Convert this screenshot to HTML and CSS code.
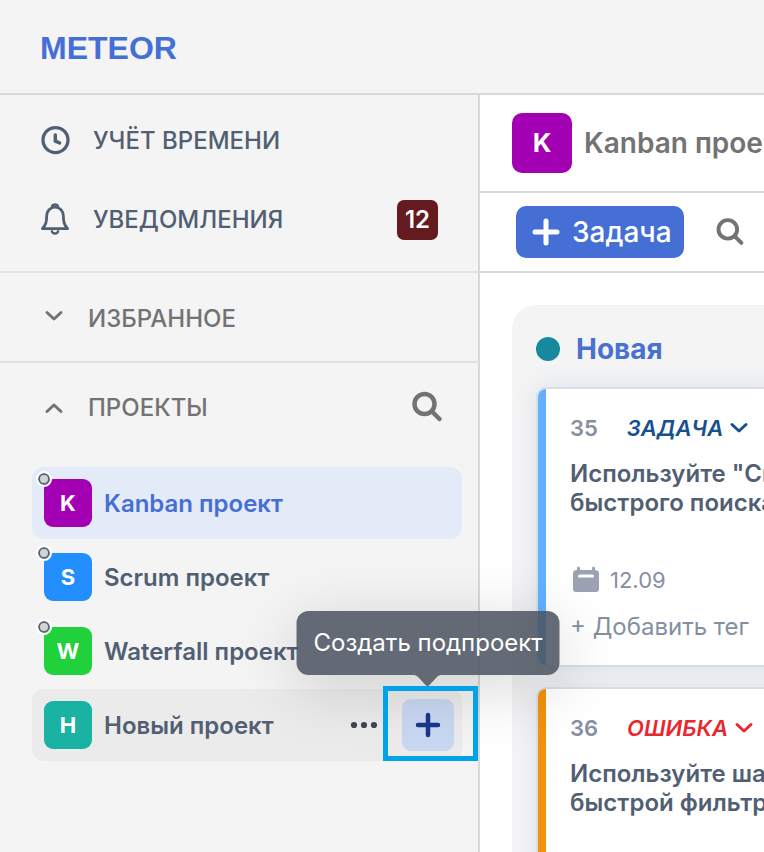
FILE: index.html
```html
<!DOCTYPE html>
<html lang="ru">
<head>
<meta charset="utf-8">
<meta name="viewport" content="width=device-width, initial-scale=1">
<title>METEOR</title>
<link rel="stylesheet" href="styles.css">
</head>
<body>
<div class="app">
  <header class="topbar"><a class="brand" href="#">METEOR</a></header>
  <div class="body">
    <aside class="sidebar">
      <nav class="menu">
        <a class="menu-item" href="#">
          <svg class="menu-icon" viewBox="0 0 32 32" fill="none" stroke="currentColor" stroke-linecap="round" stroke-linejoin="round"><circle cx="16" cy="15" r="12.900" stroke-width="3.400"/><path d="M15.800 9.800v6.400l4.400 1.700" stroke-width="3.600"/></svg>
          <span>УЧЁТ ВРЕМЕНИ</span>
        </a>
        <a class="menu-item" href="#">
          <svg class="menu-icon" viewBox="0 0 32 32" fill="none" stroke="currentColor" stroke-linecap="round" stroke-linejoin="round"><path d="M2.500 25h26c-3.400-4-4.400-6.500-4.400-13.300A8.600 8.600 0 0 0 15.500 2.800a8.600 8.600 0 0 0-8.600 8.900c0 6.800-1 9.300-4.400 13.300z" stroke-width="2.900"/><path d="M12.500 1.400c1-1.800 5-1.800 6 0M12.300 27.700c1 3 5.400 3 6.400 0" stroke-width="2.500"/></svg>
          <span>УВЕДОМЛЕНИЯ</span>
          <span class="count">12</span>
        </a>
      </nav>
      <button class="section-head" type="button">
        <svg class="chevron raised" viewBox="0 0 20 12"><path d="M3 2.500l7 6.500 7-6.500"/></svg>
        <span>ИЗБРАННОЕ</span>
      </button>
      <section class="projects">
        <div class="projects-head">
          <button class="section-head" type="button">
            <svg class="chevron" viewBox="0 0 20 12"><path d="M3 9.500L10 3l7 6.500"/></svg>
            <span>ПРОЕКТЫ</span>
          </button>
          <button class="icon-button" type="button" aria-label="Поиск"><svg class="search" viewBox="0 0 32 32"><circle cx="13.500" cy="13" r="10"/><path d="M21 20.500l7.500 7.500"/></svg></button>
        </div>
        <ul class="project-list">
          <li class="project active"><span class="avatar purple">K<i class="dot"></i></span><a href="#">Kanban проект</a></li>
          <li class="project"><span class="avatar blue">S<i class="dot"></i></span><a href="#">Scrum проект</a></li>
          <li class="project"><span class="avatar green">W<i class="dot"></i></span><a href="#">Waterfall проект</a></li>
          <li class="project hovered">
            <span class="avatar teal">Н</span><a href="#">Новый проект</a>
            <button class="more" type="button" aria-label="Ещё"><svg viewBox="0 0 28 8"><circle cx="4" cy="4" r="3.100"/><circle cx="14" cy="4" r="3.100"/><circle cx="24" cy="4" r="3.100"/></svg></button>
            <div class="add-wrap">
              <button class="add" type="button" aria-describedby="add-tip" aria-label="Создать"><svg viewBox="0 0 24 24"><path d="M12 2v20M2 12h20"/></svg></button>
              <div class="tooltip" id="add-tip" role="tooltip">Создать подпроект<svg class="arrow" viewBox="0 0 32 12"><path d="M1 0h30c-4 0-5 1.500-7 3.500l-6 6.500q-2 2-4 0L8 3.500C6 1.500 5 0 1 0z"/></svg></div>
              <div class="focus-frame"></div>
            </div>
          </li>
        </ul>
      </section>
    </aside>
    <main class="main">
      <div class="project-bar"><span class="avatar large purple">K</span><h1>Kanban проект</h1></div>
      <div class="toolbar">
        <button class="create" type="button"><svg viewBox="0 0 28 28"><path d="M14 3v22M3 14h22"/></svg><span>Задача</span></button>
        <button class="icon-button" type="button" aria-label="Поиск"><svg class="search small" viewBox="0 0 32 32"><circle cx="13.500" cy="13" r="10.600"/><path d="M21.500 21l7.500 7.500"/></svg></button>
      </div>
      <div class="board">
        <section class="column">
          <h2 class="column-title"><span class="status"></span>Новая</h2>
          <article class="card task">
            <div class="card-meta"><span class="card-id">35</span><button class="kind" type="button">ЗАДАЧА<svg viewBox="0 0 18 12"><path d="M2 2.500l7 6.500 7-6.500"/></svg></button></div>
            <h3>Используйте "Спутник" для<br>быстрого поиска</h3>
            <div class="date"><svg viewBox="0 0 28 28"><path d="M5 4V2a1.500 1.500 0 0 1 3 0v2h12V2a1.500 1.500 0 0 1 3 0v2c2.500 0 4 1 4 3.500V23c0 2-1 3-3 3H4c-2 0-3-1-3-3V7.500C1 5 2.500 4 5 4z" fill="currentColor"/><path d="M7.500 10h13" stroke="#fff" stroke-width="3" stroke-linecap="round"/></svg><span>12.09</span></div>
            <button class="tag" type="button">+ Добавить тег</button>
          </article>
          <article class="card bug">
            <div class="card-meta"><span class="card-id">36</span><button class="kind" type="button">ОШИБКА<svg viewBox="0 0 18 12"><path d="M2 2.500l7 6.500 7-6.500"/></svg></button></div>
            <h3>Используйте шаблоны для<br>быстрой фильтрации</h3>
          </article>
        </section>
      </div>
    </main>
  </div>
</div>
</body>
</html>
```
FILE: styles.css
```css
* { box-sizing: border-box; }
html, body { height: 100%; margin: 0; }
body { overflow: hidden; background: #f4f4f4; color: #525f73; font: 500 24px/30px Inter, "Noto Sans", sans-serif; }
button { padding: 0; border: 0; background: none; color: inherit; font: inherit; text-align: left; }
a { color: inherit; text-decoration: none; }
h1, h2, h3, ul { margin: 0; padding: 0; }
svg { display: block; flex: none; overflow: visible; }

.app { display: flex; flex-direction: column; height: 100vh; }
.topbar { display: flex; align-items: center; padding: 30px 40px 26px; border-bottom: 2px solid #d9d9d9; }
.brand { color: #456fd5; font: 700 32px/37px "Liberation Sans", Arial, sans-serif; }
.body { flex: 1; min-height: 0; display: grid; grid-template-columns: 480px minmax(0, 1fr); }

.sidebar { position: relative; z-index: 2; border-right: 2px solid #d9d9d9; }
.menu { padding: 6px 40px 12px; border-bottom: 2px solid #e1e1e1; }
.menu-item { display: flex; align-items: center; gap: 22px; height: 79px; }
.menu-icon { width: 31px; height: 32px; }
.count { margin-left: auto; padding: 5px 8px; border-radius: 7px; background: #651a20; color: #fff; font-weight: 600; }
.section-head { display: flex; align-items: center; gap: 24px; height: 88px; padding: 2px 0 0 44px; color: #737373; }
.sidebar > .section-head { width: 100%; height: 90px; padding-top: 4px; border-bottom: 2px solid #e1e1e1; }
.chevron { width: 20px; height: 12px; }
.chevron path, .kind path { fill: none; stroke: currentColor; stroke-width: 3; stroke-linecap: round; stroke-linejoin: round; }
.raised { margin-bottom: 6px; }
.projects-head { display: flex; align-items: center; justify-content: space-between; padding-right: 35px; color: #737373; }
.search { width: 32px; height: 32px; fill: none; stroke: #737373; stroke-width: 4.500; stroke-linecap: round; }
.search.small { width: 28px; height: 28px; }

.project-list { display: flex; flex-direction: column; gap: 2px; padding: 16px 16px 16px 32px; list-style: none; }
.project { display: flex; align-items: center; gap: 12px; height: 72px; padding: 0 8px 0 12px; border-radius: 12px; font-weight: 600; }
.project > a { padding-top: 2px; }
.active { background: #e3eaf8; color: #456fd5; }
.hovered { background: #ebebeb; }
.avatar { position: relative; flex: none; display: grid; place-items: center; width: 48px; height: 48px; border-radius: 9px; color: #fff; font-size: 22px; font-weight: 700; }
.avatar.large { width: 60px; height: 60px; border-radius: 10px; font-size: 26px; }
.purple { background: #a300b3; }
.blue { background: #238fff; }
.green { background: #20d13b; }
.teal { background: #1ab3a3; }
.dot { position: absolute; top: -6px; left: -6px; width: 12px; height: 12px; border: 2px solid #59657a; border-radius: 50%; background: #d4d4d4; outline: 2px solid #fff; }
.more { margin-left: auto; }
.more svg { width: 28px; height: 8px; fill: #3f4655; }
.add-wrap { position: relative; margin-left: 12px; }
.add { display: grid; place-items: center; width: 52px; height: 52px; border-radius: 9px; background: #c8d7f2; }
.add svg { width: 24px; height: 24px; stroke: #1a378c; stroke-width: 4.500; stroke-linecap: round; }
.focus-frame { position: absolute; inset: -13px -24px -10px -19px; border: 5px solid #00a2e8; pointer-events: none; }
.tooltip { position: absolute; bottom: calc(100% + 24px); left: 50%; transform: translateX(-50%); padding: 17px; border-radius: 12px; background: rgba(75, 83, 95, .86); box-shadow: 0 12px 64px rgba(0, 0, 0, .16); color: #fff; font-weight: 400; white-space: nowrap; }
.arrow { position: absolute; top: 100%; left: calc(50% - 16px); width: 32px; height: 12px; fill: #646a74; }

.main { min-width: 0; overflow: hidden; background: #fff; }
.project-bar { display: flex; align-items: center; gap: 12px; height: 98px; padding-left: 32px; border-bottom: 2px solid #d9d9d9; color: #737373; white-space: nowrap; }
h1 { font-size: 28px; font-weight: 600; }
.toolbar { display: flex; align-items: center; gap: 32px; height: 80px; padding-left: 36px; border-bottom: 2px solid #d9d9d9; }
.create { display: flex; align-items: center; gap: 12px; padding: 11px 12px 11px 16px; border-radius: 10px; background: #456fd5; color: #fff; font-size: 28px; }
.create svg { width: 28px; height: 28px; stroke: #fff; stroke-width: 5; stroke-linecap: round; }
.board { padding: 32px; }
.column { width: 560px; padding: 24px; border-radius: 24px; background: #f4f4f4; }
.column-title { display: flex; align-items: center; gap: 16px; height: 40px; margin-bottom: 18px; color: #4971cf; font-size: 28px; font-weight: 700; }
.status { width: 24px; height: 24px; border-radius: 50%; background: #16899e; }
.card { position: relative; margin-bottom: 20px; padding: 24px 24px 23px 32px; border: 2px solid #d9dfe5; border-radius: 10px; background: #fff; box-shadow: 0 0 24px rgba(69, 111, 213, .14); }
.card::before { content: ""; position: absolute; inset: 0 auto 0 0; width: 8px; border-radius: 8px 0 0 8px; background: currentColor; }
.task { color: #64b0ff; }
.bug { min-height: 280px; color: #f2920c; }
.card-meta { display: flex; align-items: center; gap: 29px; margin-bottom: 16px; font-size: 22px; font-weight: 600; }
.card-id, .date, .tag { color: #8490a2; }
.kind { display: flex; align-items: center; gap: 7px; font-style: italic; }
.kind svg { width: 18px; height: 12px; }
.task .kind { color: #17508f; }
.bug .kind { color: #e92730; }
h3 { color: #525f73; font-size: 24px; line-height: 29px; font-weight: 600; white-space: nowrap; }
.date { display: flex; align-items: center; gap: 10px; margin-top: 48px; padding-left: 2px; font-size: 22px; font-weight: 400; }
.date svg { width: 28px; height: 28px; color: #9ba2b1; }
.tag { margin-top: 17px; font-weight: 400; }
```
